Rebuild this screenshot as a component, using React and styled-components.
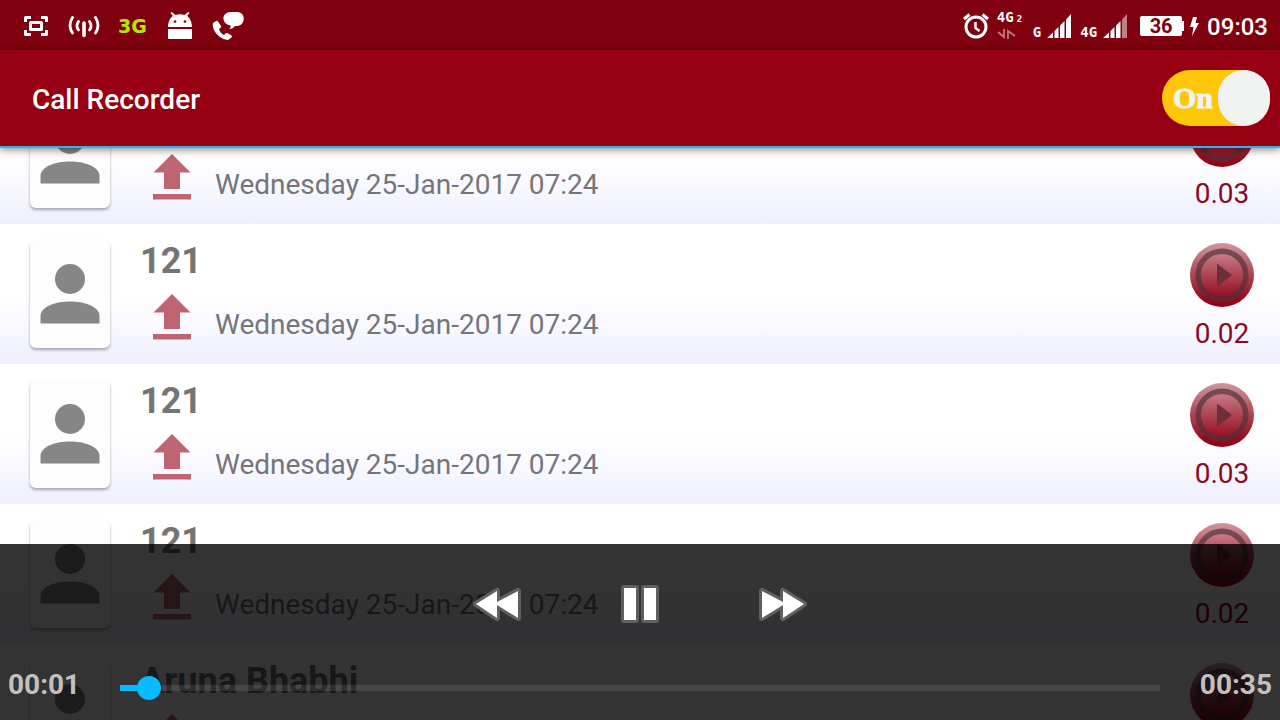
import React from "react";
import styled, { createGlobalStyle } from "styled-components";

const GlobalStyle = createGlobalStyle`
  *, *::before, *::after { box-sizing: border-box; }
  body { margin: 0; font-family: Roboto, "Liberation Sans", sans-serif; background: #fff; }
  button { padding: 0; border: 0; background: none; cursor: pointer; font: inherit; }
  svg { display: block; flex: none; }
`;

const Screen = styled.div`
  position: relative;
  display: flex;
  flex-direction: column;
  height: 100vh;
  overflow: hidden;
`;

const StatusBar = styled.div`
  display: flex;
  align-items: center;
  justify-content: space-between;
  flex: none;
  height: 50px;
  padding: 2px 12px 0 22px;
  background: #7f000f;
  border-bottom: 1px solid #74000e;
  color: #fff;
`;

const StatusGroup = styled.div`
  display: flex;
  align-items: center;
  gap: ${(p) => p.$gap}px;
`;

const NetworkBadge = styled.span`
  width: 32px;
  font: bold 19px/24px "DejaVu Sans", sans-serif;
  color: #b4e800;
`;

const CarrierStack = styled.div`
  display: flex;
  flex-direction: column;
  gap: 4px;
  width: 28px;
`;

const CarrierLabel = styled.span`
  font: bold 14px/11px "DejaVu Sans Mono", monospace;
  small { font-size: 9px; margin-left: 3px; }
`;

const SignalGroup = styled.div`
  display: flex;
  align-items: flex-end;
  gap: 6px;
  height: 24px;
`;

const Battery = styled.div`
  position: relative;
  width: 42px;
  height: 20px;
  margin-left: 4px;
  border-radius: 2px;
  background: #fff;
  color: #7f000f;
  font-size: 20px;
  font-weight: 700;
  line-height: 20px;
  text-align: center;
  &::after {
    content: "";
    position: absolute;
    left: 42px;
    top: 5px;
    width: 2px;
    height: 10px;
    background: #fff;
  }
`;

const Clock = styled.time`
  font-size: 24px;
  font-weight: 500;
  line-height: 30px;
  padding-top: 2px;
`;

const AppBar = styled.header`
  position: relative;
  z-index: 1;
  display: flex;
  align-items: center;
  justify-content: space-between;
  flex: none;
  height: 98px;
  padding: 0 10px 0 32px;
  background: #960012;
  border-bottom: 2px solid #33b2e6;
  box-shadow: 0 2px 8px rgba(0, 0, 0, 0.45);
`;

const Title = styled.h1`
  margin: 0;
  padding-top: 4px;
  font-size: 28px;
  font-weight: 500;
  line-height: 36px;
  color: #fff;
`;

const Toggle = styled.label`
  display: flex;
  align-items: center;
  justify-content: space-between;
  width: 108px;
  height: 56px;
  padding: 0 0 0 11px;
  border-radius: 28px;
  background: #ffc60a;
  color: #f1f2f2;
  font: bold 30px/32px "Liberation Serif", serif;
  -webkit-text-stroke: 1px #f1f2f2;
  cursor: pointer;
`;

const ToggleInput = styled.input`
  appearance: none;
  width: 52px;
  height: 56px;
  margin: 0;
  border-radius: 26px;
  background: #f1f2f2;
`;

const ListViewport = styled.main`
  flex: 1;
  min-height: 0;
  overflow: hidden;
`;

const CallList = styled.ul`
  margin: -64px 0 0;
  padding: 0;
  list-style: none;
`;

const CallRow = styled.li`
  display: flex;
  height: 140px;
  padding: 16px 26px 14px 30px;
  background: linear-gradient(#fff 50%, #f9f9ff 72%, #eeeeff);
`;

const ContactCard = styled.div`
  display: flex;
  align-items: center;
  justify-content: center;
  flex: none;
  width: 80px;
  height: 108px;
  border-radius: 6px;
  background: #fdfdfd;
  box-shadow: 0 2px 3px rgba(0, 0, 0, 0.32);
`;

const CallInfo = styled.div`
  flex: 1;
  min-width: 0;
  padding-left: 30px;
`;

const Caller = styled.h2`
  min-height: 42px;
  margin: 0;
  font-size: 36px;
  font-weight: 700;
  line-height: 42px;
  color: #757575;
`;

const CallMeta = styled.div`
  display: flex;
  align-items: center;
  gap: 24px;
  height: 46px;
  margin-top: 12px;
  padding-left: 13px;
`;

const CallDate = styled.time`
  padding-top: 16px;
  font-size: 28px;
  line-height: 34px;
  color: #75757a;
`;

const PlaybackCell = styled.div`
  display: flex;
  flex-direction: column;
  align-items: center;
  width: 64px;
  padding-top: 3px;
`;

const Duration = styled.span`
  margin-top: 10px;
  font-size: 28px;
  line-height: 34px;
  color: #8a0a24;
`;

const PlayerPanel = styled.section`
  position: absolute;
  left: 0;
  right: 0;
  bottom: 0;
  z-index: 2;
  height: 176px;
  padding-top: 36px;
  background: rgba(0, 0, 0, 0.8);
`;

const Transport = styled.div`
  display: flex;
  align-items: center;
  justify-content: center;
  gap: 100px;
  height: 48px;
`;

const SeekRow = styled.div`
  display: flex;
  align-items: center;
  height: 48px;
  margin-top: 36px;
  padding: 0 8px;
`;

const PlayerTime = styled.span`
  width: ${(p) => p.$width}px;
  margin-top: -6px;
  text-align: ${(p) => p.$align};
  font-size: 28px;
  font-weight: 700;
  line-height: 34px;
  color: #c4c0c1;
`;

const SeekBar = styled.input`
  flex: 1;
  min-width: 0;
  appearance: none;
  height: 24px;
  margin: 0;
  background: linear-gradient(#0abaff, #0abaff) 0 50% / 28px 6px no-repeat,
    linear-gradient(rgba(255, 255, 255, 0.1), rgba(255, 255, 255, 0.1)) 0 50% / 100% 6px no-repeat;
  &::-webkit-slider-thumb {
    appearance: none;
    width: 24px;
    height: 24px;
    border-radius: 50%;
    background: #0abaff;
  }
`;

const CaptureIcon = () => (
  <svg width="28" height="24" viewBox="0 0 28 24" fill="none" stroke="#fff" strokeWidth="3">
    <path d="M3.500 8V3.500H9M19 3.500h5.500V8M24.500 16v4.500H19M9 20.500H3.500V16M8.500 8.500h11v7h-11z" strokeLinejoin="round" />
  </svg>
);

const HotspotIcon = () => (
  <svg width="32" height="24" viewBox="0 0 32 24" fill="none" stroke="#fff" strokeWidth="2.800" strokeLinecap="round">
    <path strokeWidth="3.600" d="M16 9v12.500" />
    <path d="M10.500 7.500q-3 4.500 0 8.500M21.500 7.500q3 4.500 0 8.500M4.500 3.500q-5 8 0 15.500M27.500 3.500q5 8 0 15.500" />
  </svg>
);

const RobotIcon = () => (
  <svg width="26" height="28" viewBox="0 0 26 28" fill="#fff">
    <path d="M0 15C0 9 3 5 5 4L2.500 1l1-1 4 3q4.500-1.500 9 0l4-3 1 1L19 4c2 1 5 5 5 11z" />
    <path d="M0 17h24v9q0 1-1 1H1q-1 0-1-1z" />
    <circle cx="7" cy="9.500" r="1.300" fill="#7f000f" />
    <circle cx="17" cy="9.500" r="1.300" fill="#7f000f" />
  </svg>
);

const CallMessageIcon = () => (
  <svg width="32" height="28" viewBox="0 0 32 28" fill="#fff">
    <path d="M4 9L1 11C-1 18 8 28 16 28l4-3q0-1-1-2l-4-2q-1-.5-2 1l-1 1q-4-2-5-6l2-1.500V14L6 9.500Q5 8.500 4 9z" />
    <path d="M19 0h6c9 0 9 13 0 14h-2q-2 3-6 3 2-1 1.500-3.500C9 12 9 0 19 0z" />
  </svg>
);

const AlarmIcon = () => (
  <svg width="26" height="26" viewBox="0 0 26 26" fill="none" stroke="#fff" strokeWidth="3">
    <circle cx="13" cy="14" r="10" />
    <path d="M1 6l5.500-4.500M25 6l-5.500-4.500" strokeWidth="3" />
    <path d="M12.500 9v6l4 3" strokeWidth="2.500" />
  </svg>
);

const DataArrowsIcon = () => (
  <svg width="20" height="10" viewBox="0 0 20 10" fill="none" stroke="#c07880" strokeWidth="1.800">
    <path d="M1 3l6 5V0M11 10V2l7 5" />
  </svg>
);

const SignalIcon = ({ weak }) => (
  <svg width="25" height="24" viewBox="0 0 25 24" fill="#fff">
    <path d="M0 24l6-5.500V24zM7.500 24v-7l4-4v11zM13 24V11.500l4.500-4.500V24z" />
    <path d="M19 24V5.500L24 0v24z" opacity={weak ? 0.5 : 1} />
  </svg>
);

const BoltIcon = () => (
  <svg width="9" height="22" viewBox="0 0 9 22" fill="#fff">
    <path d="M3 2h4L5.500 8H9L2 21l1.500-9H0z" />
  </svg>
);

const PersonIcon = () => (
  <svg width="60" height="60" viewBox="0 0 60 60" fill="#868686">
    <circle cx="30" cy="15" r="15" />
    <path d="M0.500 59.500V51C2 42 16 37.500 30 37.500s28 4.500 29.500 13.500v8.500z" />
  </svg>
);

const UploadIcon = () => (
  <svg width="38" height="46" viewBox="0 0 38 46" fill="#bf6471">
    <path d="M19 0l18.500 18.500H27V35H11V18.500H0.500zM0 40h38v5.500H0z" />
  </svg>
);

const PlayIcon = () => (
  <svg width="64" height="64" viewBox="0 0 64 64">
    <defs>
      <linearGradient id="disc" x1="0" y1="0" x2="0" y2="1">
        <stop offset="0" stopColor="#cf969f" />
        <stop offset="0.500" stopColor="#ae4453" />
        <stop offset="0.850" stopColor="#960c20" />
        <stop offset="1" stopColor="#900016" />
      </linearGradient>
      <linearGradient id="ring" x1="0" y1="0" x2="0" y2="1">
        <stop offset="0" stopColor="#784b52" />
        <stop offset="1" stopColor="#642430" />
      </linearGradient>
    </defs>
    <circle cx="32" cy="32" r="32" fill="url(#disc)" />
    <circle cx="32" cy="32" r="23.800" fill="none" stroke="url(#ring)" strokeWidth="5.500" />
    <path d="M27 20.500L42 32 27 44z" fill="#6c303b" />
  </svg>
);

const RewindIcon = () => (
  <svg width="48" height="34" viewBox="0 0 48 34" stroke="#606060" strokeWidth="6" strokeLinejoin="round" fill="#fff" paintOrder="stroke">
    <path d="M3 17L24 4v11L45 4v27L24 18v13z" />
  </svg>
);

const PauseIcon = () => (
  <svg width="38" height="38" viewBox="0 0 38 38" stroke="#606060" strokeWidth="6" strokeLinejoin="round" fill="#fff" paintOrder="stroke">
    <path d="M3 3h12v32H3zM23 3h12v32H23z" />
  </svg>
);

const ForwardIcon = () => (
  <svg width="48" height="34" viewBox="0 0 48 34" stroke="#606060" strokeWidth="6" strokeLinejoin="round" fill="#fff" paintOrder="stroke">
    <path d="M45 17L24 4v11L3 4v27l21-13v13z" />
  </svg>
);

const calls = [
  { caller: "", date: "Wednesday 25-Jan-2017 07:24", duration: "0.03" },
  { caller: "121", date: "Wednesday 25-Jan-2017 07:24", duration: "0.02" },
  { caller: "121", date: "Wednesday 25-Jan-2017 07:24", duration: "0.03" },
  { caller: "121", date: "Wednesday 25-Jan-2017 07:24", duration: "0.02" },
  { caller: "Aruna Bhabhi", date: "", duration: "" },
];

export default function App() {
  return (
    <Screen>
      <GlobalStyle />
      <StatusBar>
        <StatusGroup $gap={18}>
          <CaptureIcon />
          <HotspotIcon />
          <NetworkBadge>3G</NetworkBadge>
          <RobotIcon />
          <CallMessageIcon />
        </StatusGroup>
        <StatusGroup $gap={8}>
          <AlarmIcon />
          <CarrierStack>
            <CarrierLabel>4G<small>2</small></CarrierLabel>
            <DataArrowsIcon />
          </CarrierStack>
          <SignalGroup>
            <CarrierLabel>G</CarrierLabel>
            <SignalIcon />
          </SignalGroup>
          <SignalGroup>
            <CarrierLabel>4G</CarrierLabel>
            <SignalIcon weak />
          </SignalGroup>
          <Battery>36</Battery>
          <BoltIcon />
          <Clock>09:03</Clock>
        </StatusGroup>
      </StatusBar>
      <AppBar>
        <Title>Call Recorder</Title>
        <Toggle>
          On
          <ToggleInput type="checkbox" role="switch" defaultChecked />
        </Toggle>
      </AppBar>
      <ListViewport>
        <CallList>
          {calls.map((call, i) => (
            <CallRow key={i}>
              <ContactCard><PersonIcon /></ContactCard>
              <CallInfo>
                <Caller>{call.caller}</Caller>
                <CallMeta>
                  <button aria-label="Upload recording"><UploadIcon /></button>
                  <CallDate>{call.date}</CallDate>
                </CallMeta>
              </CallInfo>
              <PlaybackCell>
                <button aria-label="Play recording"><PlayIcon /></button>
                <Duration>{call.duration}</Duration>
              </PlaybackCell>
            </CallRow>
          ))}
        </CallList>
      </ListViewport>
      <PlayerPanel>
        <Transport>
          <button aria-label="Rewind"><RewindIcon /></button>
          <button aria-label="Pause"><PauseIcon /></button>
          <button aria-label="Fast forward"><ForwardIcon /></button>
        </Transport>
        <SeekRow>
          <PlayerTime $width={112} $align="left">00:01</PlayerTime>
          <SeekBar type="range" min="0" max="1000" defaultValue="17" aria-label="Playback position" />
          <PlayerTime $width={112} $align="right">00:35</PlayerTime>
        </SeekRow>
      </PlayerPanel>
    </Screen>
  );
}
